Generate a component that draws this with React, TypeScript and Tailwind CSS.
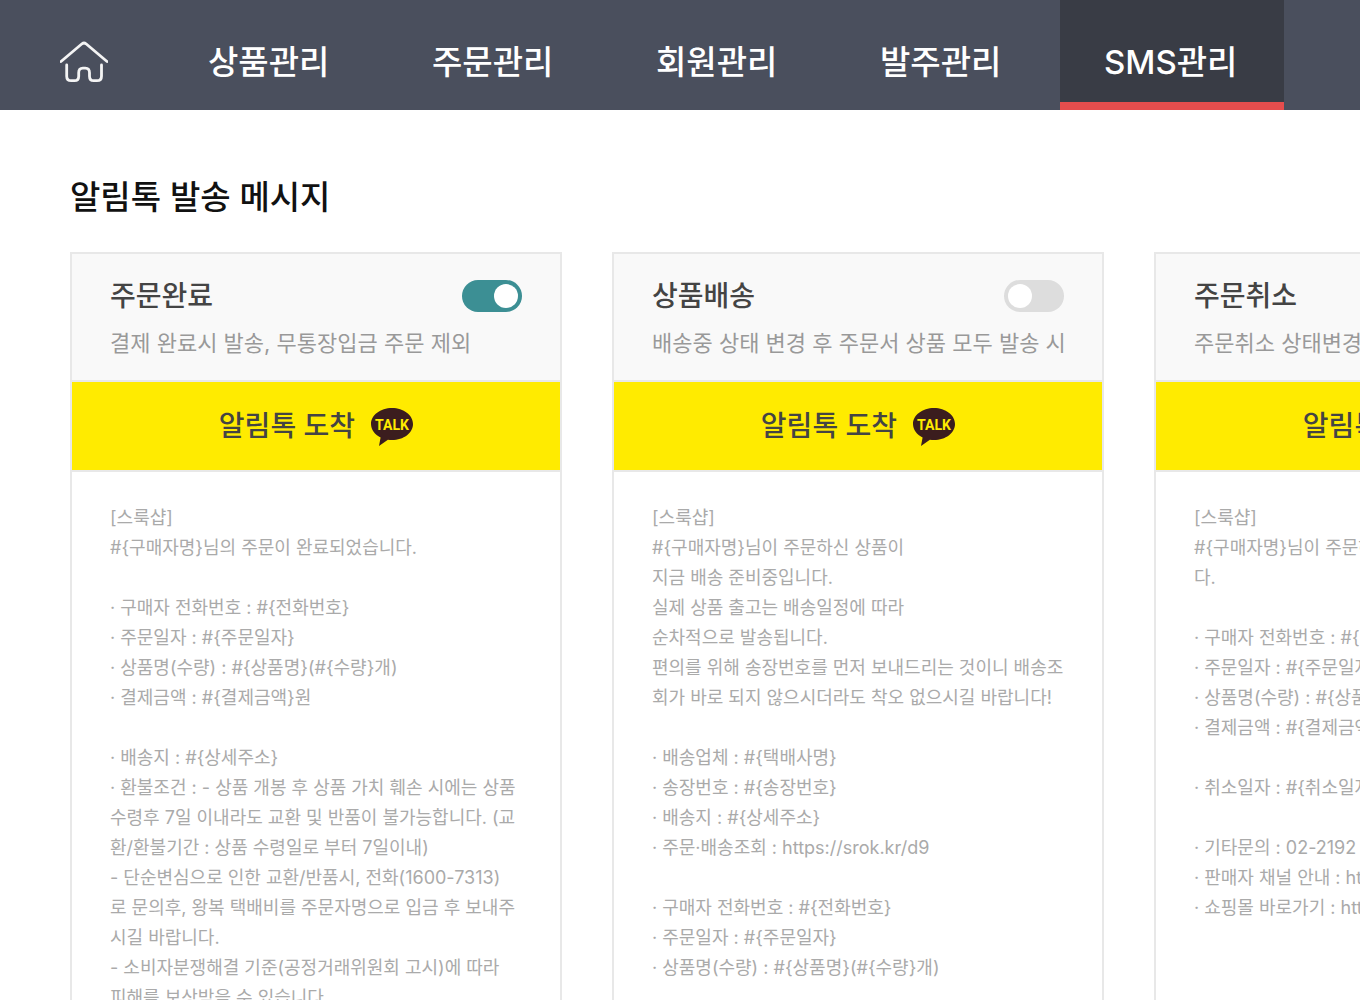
import { useState } from "react";

const menus = ["상품관리", "주문관리", "회원관리", "발주관리", "SMS관리"];

const messages = [
  {
    id: "order-complete",
    title: "주문완료",
    desc: "결제 완료시 발송, 무통장입금 주문 제외",
    enabled: true,
    lines: [
      "[스룩샵]",
      "#{구매자명}님의 주문이 완료되었습니다.",
      "",
      "· 구매자 전화번호 : #{전화번호}",
      "· 주문일자 : #{주문일자}",
      "· 상품명(수량) : #{상품명}(#{수량}개)",
      "· 결제금액 : #{결제금액}원",
      "",
      "· 배송지 : #{상세주소}",
      "· 환불조건 : - 상품 개봉 후 상품 가치 훼손 시에는 상품",
      "수령후 7일 이내라도 교환 및 반품이 불가능합니다. (교",
      "환/환불기간 : 상품 수령일로 부터 7일이내)",
      "- 단순변심으로 인한 교환/반품시, 전화(1600-7313)",
      "로 문의후, 왕복 택배비를 주문자명으로 입금 후 보내주",
      "시길 바랍니다.",
      "- 소비자분쟁해결 기준(공정거래위원회 고시)에 따라",
      "피해를 보상받을 수 있습니다.",
    ],
  },
  {
    id: "shipping",
    title: "상품배송",
    desc: "배송중 상태 변경 후 주문서 상품 모두 발송 시",
    enabled: false,
    lines: [
      "[스룩샵]",
      "#{구매자명}님이 주문하신 상품이",
      "지금 배송 준비중입니다.",
      "실제 상품 출고는 배송일정에 따라",
      "순차적으로 발송됩니다.",
      "편의를 위해 송장번호를 먼저 보내드리는 것이니 배송조",
      "회가 바로 되지 않으시더라도 착오 없으시길 바랍니다!",
      "",
      "· 배송업체 : #{택배사명}",
      "· 송장번호 : #{송장번호}",
      "· 배송지 : #{상세주소}",
      "· 주문·배송조회 : https://srok.kr/d9",
      "",
      "· 구매자 전화번호 : #{전화번호}",
      "· 주문일자 : #{주문일자}",
      "· 상품명(수량) : #{상품명}(#{수량}개)",
    ],
  },
  {
    id: "order-cancel",
    title: "주문취소",
    desc: "주문취소 상태변경 시",
    enabled: false,
    lines: [
      "[스룩샵]",
      "#{구매자명}님이 주문하신 상품이 취소되었습니",
      "다.",
      "",
      "· 구매자 전화번호 : #{전화번호}",
      "· 주문일자 : #{주문일자}",
      "· 상품명(수량) : #{상품명}(#{수량}개)",
      "· 결제금액 : #{결제금액}원",
      "",
      "· 취소일자 : #{취소일자}",
      "",
      "· 기타문의 : 02-2192",
      "· 판매자 채널 안내 : https://",
      "· 쇼핑몰 바로가기 : https://",
    ],
  },
];

function HomeIcon() {
  return (
    <svg
      width="48"
      height="42"
      viewBox="0 0 48 42"
      fill="none"
      stroke="#f4f4f4"
      strokeWidth="2.8"
      strokeLinecap="round"
      strokeLinejoin="round"
      aria-hidden="true"
    >
      <path d="M1 20.500 22 2.800q2-1.600 4 0L47 20.500" />
      <path d="M6.700 24v11.200q0 4.500 4.500 4.500h3.300q4.200 0 4.200-4.500v-3.400q0-4.600 4.200-4.600h2.400q4.200 0 4.200 4.600v3.400q0 4.500 4.200 4.500h3.300q4.500 0 4.500-4.500V24" />
    </svg>
  );
}

function TalkIcon() {
  return (
    <svg width="42" height="40" viewBox="0 -2 42 40" aria-hidden="true">
      <path
        fill="#3b1d1e"
        d="M21 0C9.400 0 0 7.100 0 16c0 5.700 3.800 10.700 9.600 13.500L8 38l8.900-6.300q2 .4 4.100.4c11.600 0 21-7.200 21-16.100S32.600 0 21 0Z"
      />
      <text
        x="21"
        y="22"
        textAnchor="middle"
        fill="#ffeb00"
        className="font-['Roboto'] text-[14px] font-bold"
      >
        TALK
      </text>
    </svg>
  );
}

function MessageCard({ message }: { message: (typeof messages)[number] }) {
  const [enabled, setEnabled] = useState(message.enabled);

  return (
    <section className="w-[492px] shrink-0 border-2 border-[#e8e8e8]">
      <div className="border-b-2 border-[#e8e8e8] bg-[#f9f9f9] px-[38px] pt-[22px] pb-[18px]">
        <div className="flex h-10 items-center justify-between">
          <label htmlFor={message.id} className="text-[28px] leading-10 font-medium text-[#444]">
            {message.title}
          </label>
          <input
            id={message.id}
            type="checkbox"
            role="switch"
            checked={enabled}
            onChange={(e) => setEnabled(e.target.checked)}
            className="flex h-8 w-[60px] cursor-pointer appearance-none items-center rounded-full bg-[#ddd] px-1 before:size-6 before:rounded-full before:bg-white before:content-[''] checked:justify-end checked:bg-[#3c8f94]"
          />
        </div>
        <p className="mt-2 text-[22px] leading-[38px] whitespace-nowrap text-[#999]">{message.desc}</p>
      </div>
      <div className="flex h-[90px] items-center justify-center gap-4 border-b-2 border-[#e8e8e8] bg-[#ffeb00]">
        <strong className="text-[28px] leading-10 font-medium text-[#444]">알림톡 도착</strong>
        <TalkIcon />
      </div>
      <p className="px-[38px] py-[31px] text-[18px] leading-[30px] whitespace-pre text-[#aaa]">
        {message.lines.join("\n")}
      </p>
    </section>
  );
}

export default function App() {
  const [current, setCurrent] = useState("SMS관리");

  return (
    <div className="min-h-screen overflow-x-hidden bg-white font-['Inter','Noto_Sans_CJK_KR',sans-serif]">
      <nav className="flex h-[110px] bg-[#4a4f5d]">
        <a href="#home" aria-label="홈" className="flex w-[164px] shrink-0 items-center pt-3.5 pl-[60px]">
          <HomeIcon />
        </a>
        {menus.map((menu) => (
          <button
            key={menu}
            type="button"
            onClick={() => setCurrent(menu)}
            className={
              "w-56 shrink-0 cursor-pointer border-b-8 pt-[22px] pl-11 text-left text-[33px] leading-10 font-medium text-white " +
              (menu === current ? "border-[#e54d4d] bg-[#393c45]" : "border-transparent")
            }
          >
            {menu}
          </button>
        ))}
      </nav>
      <main className="px-[70px] pt-16 pb-16">
        <h1 className="text-[33px] leading-[46px] font-medium text-[#111]">알림톡 발송 메시지</h1>
        <div className="mt-8 flex gap-[50px]">
          {messages.map((message) => (
            <MessageCard key={message.id} message={message} />
          ))}
        </div>
      </main>
    </div>
  );
}
